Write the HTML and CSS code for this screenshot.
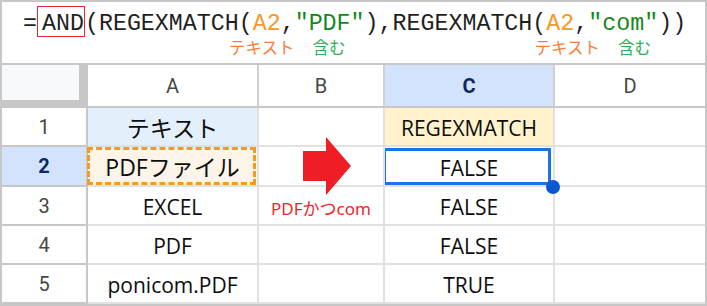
FILE: index.html
```html
<!DOCTYPE html>
<html>
<head>
    <title>REGEXMATCH AND</title>
    <link rel="stylesheet" href="styles.css">
</head>
<body>
    <div class="sheet">
        <div class="formula-bar">
            <div class="formula"><span class="eq">=</span><span class="fn-box">AND</span>(REGEXMATCH(<span class="ref">A2</span>,<span class="str">"PDF"</span>),REGEXMATCH(<span class="ref">A2</span>,<span class="str">"com"</span>))</div>
            <div class="notes">
                <span class="note-text">テキスト</span>
                <span class="note-has">含む</span>
                <span class="note-text second">テキスト</span>
                <span class="note-has">含む</span>
            </div>
        </div>

        <div class="grid">
            <!-- header row -->
            <div class="corner"></div>
            <div class="col-head">A</div>
            <div class="col-head">B</div>
            <div class="col-head active">C</div>
            <div class="col-head last">D</div>

            <!-- row 1 -->
            <div class="row-head">1</div>
            <div class="cell jp title-a">テキスト</div>
            <div class="cell"></div>
            <div class="cell title-c">REGEXMATCH</div>
            <div class="cell last"></div>

            <!-- row 2 -->
            <div class="row-head active">2</div>
            <div class="cell jp copied">PDFファイル</div>
            <div class="cell arrow-cell">
                <svg class="arrow" width="48" height="58" viewBox="0 0 48 58">
                    <rect x="0" y="14" width="24" height="30" fill="#ee1d26"/>
                    <polygon points="23,0 48,29 23,58" fill="#ee1d26"/>
                </svg>
            </div>
            <div class="cell selected">FALSE<span class="handle"></span></div>
            <div class="cell last"></div>

            <!-- row 3 -->
            <div class="row-head">3</div>
            <div class="cell">EXCEL</div>
            <div class="cell note-red">PDFかつcom</div>
            <div class="cell">FALSE</div>
            <div class="cell last"></div>

            <!-- row 4 -->
            <div class="row-head">4</div>
            <div class="cell">PDF</div>
            <div class="cell"></div>
            <div class="cell">FALSE</div>
            <div class="cell last"></div>

            <!-- row 5 -->
            <div class="row-head">5</div>
            <div class="cell">ponicom.PDF</div>
            <div class="cell"></div>
            <div class="cell">TRUE</div>
            <div class="cell last"></div>
        </div>
    </div>
</body>
</html>
```

FILE: styles.css
```css
body {
    margin: 0;
    padding: 0;
    background-color: #fff;
}
.sheet {
    width: 707px;
    height: 306px;
    box-sizing: border-box;
    border: 2px solid #c7c7c7;
    background-color: #fff;
    overflow: hidden;
}

/* formula bar */
.formula-bar {
    height: 63px;
    box-sizing: border-box;
    border-bottom: 2px solid #c7c7c7;
    padding: 4px 0 0 21px;
}
.formula {
    font-family: "Liberation Mono", monospace;
    font-size: 23.3px;
    line-height: 28px;
    color: #1f1f1f;
    white-space: nowrap;
}
.fn-box {
    display: inline-block;
    border: 1px solid #e3262b;
    line-height: 24px;
    padding: 5px 0 0 4px;
}
.ref {
    color: #f59a23;
}
.str {
    color: #13891a;
}
.notes {
    display: flex;
    font-family: "Noto Sans CJK JP", sans-serif;
    font-size: 16.5px;
    line-height: 20px;
    padding-left: 206px;
    margin-top: -1px;
}
.note-text {
    color: #fb7d3c;
}
.note-has {
    color: #2fae55;
    margin-left: 18px;
}
.note-text.second {
    margin-left: 189px;
}

/* grid */
.grid {
    display: grid;
    grid-template-columns: 86px 171px 126px 170px 150px;
    grid-template-rows: 43px 39px 40px 39px 39px 39px;
}
.corner {
    background-color: #f8f9fa;
    border-right: 9px solid #c7c7c7;
    border-bottom: 8px solid #c7c7c7;
}
.col-head,
.row-head,
.cell {
    display: flex;
    align-items: center;
    justify-content: center;
    box-sizing: border-box;
}
.col-head {
    font-family: Roboto, sans-serif;
    font-size: 20px;
    color: #444746;
    border-right: 2px solid #d0d0d0;
    border-bottom: 2px solid #c7c7c7;
}
.row-head {
    font-family: Roboto, sans-serif;
    font-size: 20px;
    color: #444746;
    border-right: 2px solid #c7c7c7;
    border-bottom: 2px solid #c7c7c7;
}
.col-head.active,
.row-head.active {
    background-color: #d3e3fd;
    color: #0b2a5b;
    font-weight: bold;
}
.cell {
    font-family: "Open Sans", "Noto Sans CJK JP", sans-serif;
    font-size: 21px;
    color: #0d0d0d;
    padding-top: 3px;
    border-right: 2px solid #e1e1e1;
    border-bottom: 2px solid #e1e1e1;
    position: relative;
}
.last {
    border-right: none;
}
.cell.jp {
    font-size: 23px;
    padding-top: 0;
}
.title-a {
    background-color: #e3effb;
}
.title-c {
    background-color: #fff2cc;
}
.copied {
    background-color: #fdf4e8;
}
.copied::after {
    content: "";
    position: absolute;
    top: 0;
    left: -1px;
    right: 1px;
    bottom: 0;
    border: 3px dashed #f7991c;
}
.arrow-cell {
    z-index: 2;
}
.arrow {
    position: absolute;
    left: 44px;
    top: -10px;
}
.note-red {
    font-family: "Noto Sans", "Noto Sans CJK JP", sans-serif;
    font-size: 17px;
    color: #f0252c;
    padding-top: 4px;
}
.selected::after {
    content: "";
    position: absolute;
    top: 1px;
    left: -2px;
    right: 2px;
    bottom: 0;
    border: 3px solid #1a73e8;
}
.handle {
    position: absolute;
    left: 161px;
    top: 33px;
    width: 14px;
    height: 14px;
    border-radius: 50%;
    background-color: #0b57d0;
    z-index: 3;
}
```
